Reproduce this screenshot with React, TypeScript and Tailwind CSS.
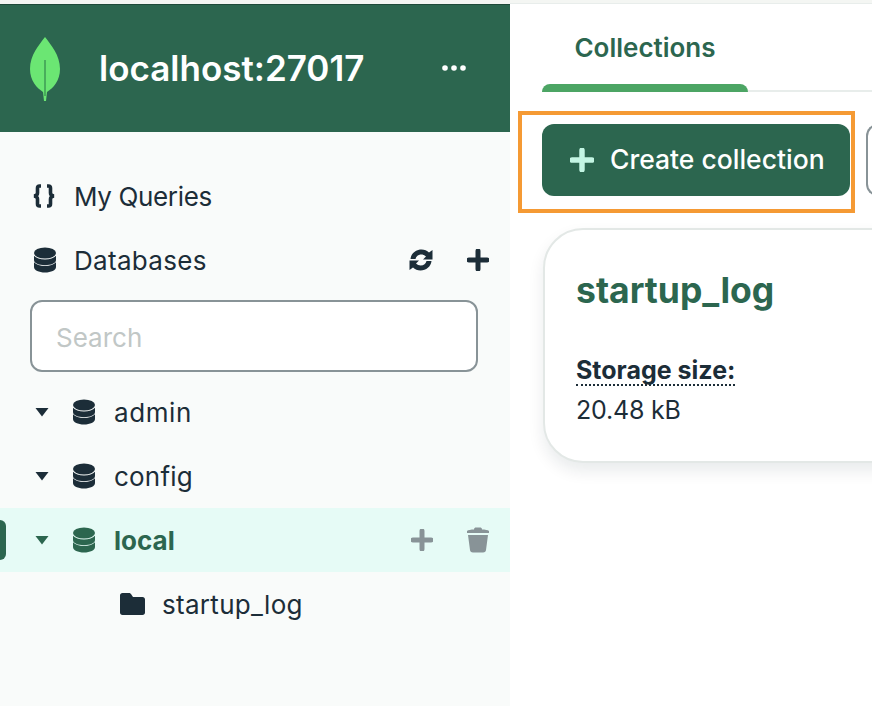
import React from "react";

function Db({ color = "#1C2D38" }: { color?: string }) {
  return (
    <svg width="24" height="26" viewBox="0 0 24 26" fill={color} className="shrink-0">
      <ellipse cx="12" cy="6" rx="11" ry="5.500" />
      <path d="M1 8.800C3 11.200 7.200 12.600 12 12.600s9-1.400 11-3.800V13c0 3.200-4.900 5.200-11 5.200S1 16.200 1 13z" />
      <path d="M1 15.300C3 17.700 7.200 19.100 12 19.100s9-1.400 11-3.800V20c0 3.200-4.900 5.500-11 5.500S1 23.200 1 20z" />
    </svg>
  );
}

function Caret({ color = "#1C2D38" }: { color?: string }) {
  return (
    <svg width="14" height="10" viewBox="0 0 14 10" className="shrink-0">
      <path d="M0.500 1h13L7 9.500z" fill={color} />
    </svg>
  );
}

function Plus({ color = "#1C2D38", size = 22, w = 5 }: { color?: string; size?: number; w?: number }) {
  return (
    <svg width={size} height={size} viewBox="0 0 22 22" className="shrink-0">
      <path d="M11 2v18M2 11h18" stroke={color} strokeWidth={w} strokeLinecap="round" />
    </svg>
  );
}

function Row({ name, track }: { name: string; track: string }) {
  return (
    <div className="flex h-16 items-center pl-[35px]">
      <Caret />
      <div className="ml-[23px]"><Db /></div>
      <span className={`ml-[18px] text-[26px] text-[#1C2D38] ${track}`}>{name}</span>
    </div>
  );
}

export default function App() {
  return (
    <div className="relative flex h-[706px] w-[872px] overflow-hidden bg-white font-['Inter','Liberation_Sans',sans-serif]">
      <aside className="flex h-full w-[510px] shrink-0 flex-col bg-[#F9FBFA]">
        <div className="h-1 shrink-0 bg-[#F4F6F3]" />
        <header className="flex h-[128px] shrink-0 items-center border-t border-[#1F4A3A] bg-[#2C664F] pl-[30px] pr-[44px]">
          <svg width="30" height="66" viewBox="0 0 30 66" className="shrink-0">
            <path d="M15 1C21 9 30 19 30 33C30 45 23 52 17 56L16 65H14L13 56C7 52 0 45 0 33C0 19 9 9 15 1Z" fill="#6BE673" />
            <path d="M15 24V60" stroke="#3E9A55" strokeWidth="1.500" />
          </svg>
          <span className="ml-[39px] whitespace-nowrap text-[35px] font-semibold text-white">localhost:27017</span>
          <svg width="24" height="6" viewBox="0 0 24 6" className="ml-auto -translate-y-px" fill="#fff">
            <circle cx="3" cy="3" r="2.800" /><circle cx="12" cy="3" r="2.800" /><circle cx="21" cy="3" r="2.800" />
          </svg>
        </header>

        <nav className="mt-8 flex h-16 shrink-0 items-center pl-8">
          <svg width="24" height="24" viewBox="0 0 24 24" fill="none" stroke="#1C2D38" strokeWidth="3.600" className="shrink-0">
            <path d="M9 2H7.500C6 2 5.500 2.700 5.500 4v5c0 1.500-.8 2.700-3.500 3 2.700.3 3.500 1.500 3.500 3v5c0 1.300.5 2 2 2H9" />
            <path d="M15 2h1.500c1.500 0 2 .7 2 2v5c0 1.500.8 2.700 3.500 3-2.700.3-3.500 1.500-3.500 3v5c0 1.300-.5 2-2 2H15" />
          </svg>
          <span className="ml-[19px] -translate-x-px text-[26px] tracking-[-0.35px] text-[#1C2D38]">My Queries</span>
        </nav>
        <div className="flex h-16 shrink-0 items-center pl-[33px] pr-[21px]">
          <Db />
          <span className="ml-[18px] -translate-x-px text-[26px] tracking-[0.3px] text-[#1C2D38]">Databases</span>
          <svg width="26" height="24" viewBox="0 0 26 24" className="ml-auto -translate-x-px" fill="#1C2D38">
            <path d="M2.500 11C3 5.500 8 1.500 13.500 1.500c3 0 5.500 1 7.500 3L24.500 2v9.500H15l3-3c-1.200-1.300-3-2-4.700-2-3 0-5.300 1.800-5.800 4.500z" />
            <path d="M23.500 13c-.5 5.500-5.500 9.500-11 9.500-3 0-5.500-1-7.500-3L1.500 22v-9.500H11l-3 3c1.200 1.300 3 2 4.700 2 3 0 5.300-1.800 5.800-4.500z" />
          </svg>
          <div className="ml-[32px]"><Plus /></div>
        </div>

        <div className="ml-[30px] mt-2 flex h-[72px] w-[448px] shrink-0 items-center rounded-xl border-2 border-[#889397] bg-white pl-6 pt-[2px]">
          <span className="text-[26px] text-[#C1C7C6]">Search</span>
        </div>

        <div className="mt-2 shrink-0">
          <Row name="admin" track="tracking-[0.6px]" />
          <Row name="config" track="tracking-[0.2px]" />
          <div className="relative flex h-16 items-center bg-[#E6FBF6] pl-[35px] pr-[21px]">
            <div className="absolute left-0 top-[12px] h-10 w-[6px] rounded-r-md bg-[#2C664F]" />
            <Caret color="#2C664F" />
            <div className="ml-[23px]"><Db color="#2C664F" /></div>
            <span className="ml-[18px] text-[26px] font-bold text-[#2C664F]">local</span>
            <div className="ml-auto"><Plus color="#889397" /></div>
            <svg width="22" height="26" viewBox="0 0 22 26" className="ml-[34px]" fill="#889397">
              <path d="M7 2.500C7 1 8 0.500 9 0.500h4c1 0 2 .500 2 2 3 0 6 .500 7 1.500v2H0V4c1-1 4-1.500 7-1.500z" />
              <path d="M1 8h20l-2 15c-.2 1.500-1 2.500-3 2.500H6c-2 0-2.800-1-3-2.500z" />
            </svg>
          </div>
          <div className="flex h-16 items-center pl-[120px]">
            <svg width="25" height="22" viewBox="0 0 25 22" fill="#1C2D38" className="shrink-0">
              <path d="M0 2.500C0 1 1 0 2.500 0H9c1 0 1.500.500 2 1l2 3h9.500C24 4 25 5 25 6.500v13c0 1.500-1 2.500-2.500 2.500h-20C1 22 0 21 0 19.500z" />
            </svg>
            <span className="ml-[17px] text-[26px] tracking-[0.3px] text-[#1C2D38]">startup_log</span>
          </div>
        </div>
      </aside>

      <main className="flex min-w-0 flex-1 flex-col">
        <div className="h-1 shrink-0 border-b border-[#E8EDEB] bg-[#F4F6F3]" />
        <div className="ml-8 flex h-[88px] shrink-0 border-b-2 border-[#E8EDEB]">
          <div className="relative flex h-[88px] w-[206px] shrink-0 justify-center pt-[24px]">
            <span className="text-[26px] font-semibold leading-[40px] text-[#2C664F]">Collections</span>
            <div className="absolute bottom-0 left-0 h-2 w-full rounded-t-lg bg-[#4CA564]" />
          </div>
        </div>
        <div className="ml-8 mt-8 flex h-[72px] shrink-0 gap-4">
          <div className="flex h-[72px] w-[308px] shrink-0 items-center rounded-xl bg-[#2C664F] pl-7">
            <Plus color="#C3F5E3" size={24} w={5} />
            <span className="ml-[16px] whitespace-nowrap text-[26.500px] font-medium text-white">Create collection</span>
          </div>
          <div className="h-[72px] w-[40px] shrink-0 rounded-l-xl border-2 border-r-0 border-[#889397] bg-white" />
        </div>
        <div className="ml-[33px] mt-8 h-[235px] w-[420px] shrink-0 rounded-[40px] border-2 border-[#E3E8E6] bg-white pl-[31px] pt-[37px] shadow-[0_8px_16px_rgba(0,30,43,0.09)]">
          <div className="text-[35.500px] font-bold leading-[48px] text-[#2C664F]">startup_log</div>
          <div className="mt-[41px] w-fit border-b-2 border-dotted border-[#1C2D38] text-[25px] font-bold leading-[28px] text-[#1C2D38]">Storage size:</div>
          <div className="mt-[8px] text-[25px] leading-[32px] tracking-[-0.2px] text-[#1C2D38]">20.48 kB</div>
        </div>
      </main>

      <div className="pointer-events-none absolute left-[518px] top-[111px] h-[102px] w-[337px] border-4 border-[#F59A34]" />
    </div>
  );
}
